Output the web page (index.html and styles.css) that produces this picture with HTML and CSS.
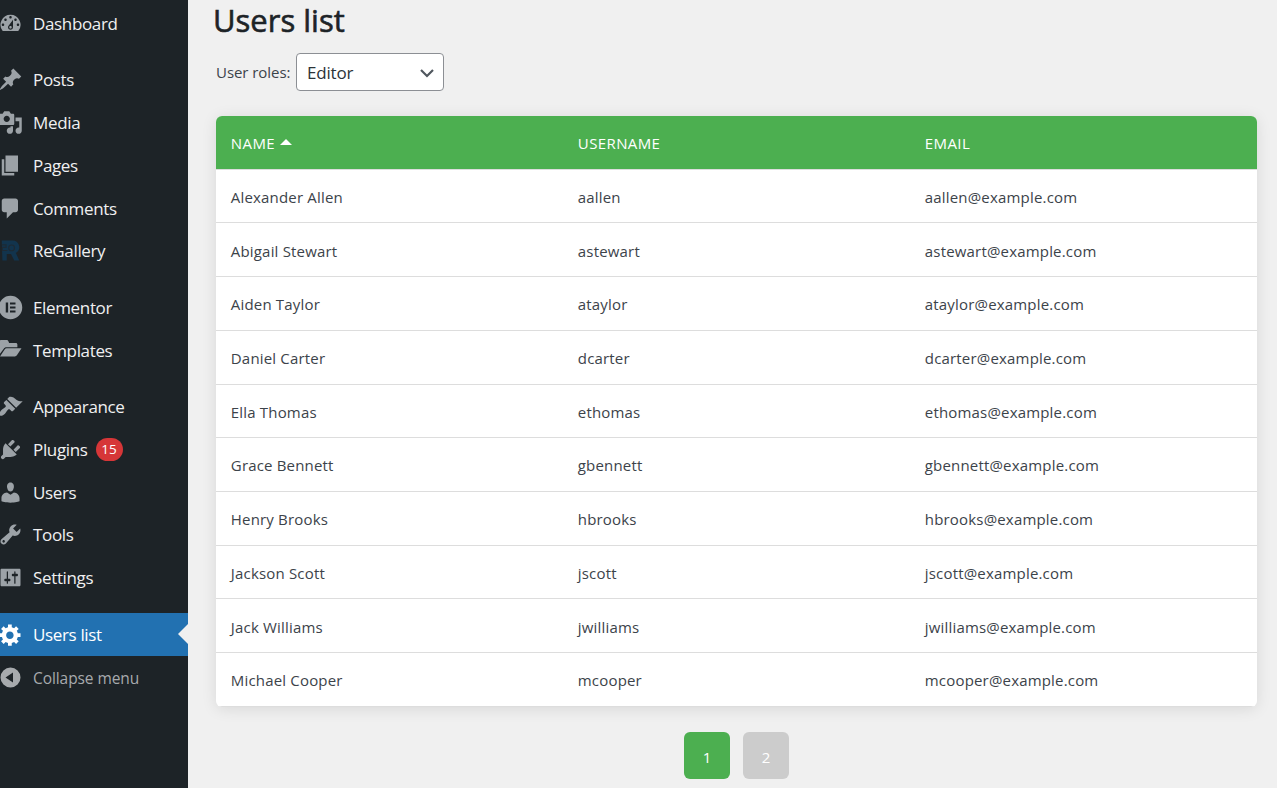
FILE: index.html
```
<!DOCTYPE html>
<html lang="en">
<head>
<meta charset="utf-8">
<title>Users list</title>
<link rel="stylesheet" href="styles.css">
</head>
<body>
<div class="app">
  <nav class="sidebar">
    <ul class="menu">
      <li class="item"><svg class="icon" viewBox="0 0 20 20"><path d="M3.76 16h12.48A7.998 7.998 0 0 0 10 3a7.998 7.998 0 0 0-6.24 13zM10 4c.55 0 1 .45 1 1s-.45 1-1 1-1-.45-1-1 .45-1 1-1zM6 6c.55 0 1 .45 1 1s-.45 1-1 1-1-.45-1-1 .45-1 1-1zm8 0c.55 0 1 .45 1 1s-.45 1-1 1-1-.45-1-1 .45-1 1-1zm-5.37 5.55L12 7v6c0 1.1-.9 2-2 2s-2-.9-2-2c0-.57.24-1.08.63-1.45zM4 10c.55 0 1 .45 1 1s-.45 1-1 1-1-.45-1-1 .45-1 1-1zm12 0c.55 0 1 .45 1 1s-.45 1-1 1-1-.45-1-1 .45-1 1-1zm-5 3c0-.55-.45-1-1-1s-1 .45-1 1 .45 1 1 1 1-.45 1-1z" fill-rule="evenodd"/></svg><span class="label">Dashboard</span></li>
    </ul>
    <ul class="menu">
      <li class="item"><svg class="icon" viewBox="0 0 20 20"><path d="M10.44 3.02l1.82-1.82 6.36 6.35-1.83 1.82c-1.05-.68-2.48-.57-3.41.36l-.75.75c-.92.93-1.04 2.35-.35 3.41l-1.83 1.82-2.41-2.41-2.8 2.79c-.42.42-3.38 2.71-3.8 2.29s1.86-3.39 2.28-3.81l2.79-2.79L4.1 9.36l1.83-1.82c1.05.69 2.48.57 3.4-.36l.75-.75c.93-.92 1.05-2.35.36-3.41z"/></svg><span class="label">Posts</span></li>
      <li class="item"><svg class="icon" viewBox="0 0 20 20"><path fill-rule="evenodd" d="M13 11V4c0-.55-.45-1-1-1h-1.67L9 1H5L3.67 3H2c-.55 0-1 .45-1 1v7c0 .55.45 1 1 1h10c.55 0 1-.45 1-1zM7 4.5c1.38 0 2.5 1.12 2.5 2.5S8.38 9.5 7 9.5 4.5 8.38 4.5 7 5.62 4.5 7 4.5zM14 6h5v10.5c0 1.38-1.12 2.5-2.5 2.5S14 17.88 14 16.5s1.12-2.5 2.5-2.5c.17 0 .34.02.5.05V9h-3V6zm-4 8.05V13h2v3.5c0 1.38-1.12 2.5-2.5 2.5S7 17.88 7 16.5 8.12 14 9.5 14c.17 0 .34.02.5.05z"/></svg><span class="label">Media</span></li>
      <li class="item"><svg class="icon" viewBox="0 0 20 20"><path d="M6 15V2h10v13H6zm-1 1h8v2H3V5h2v11z"/></svg><span class="label">Pages</span></li>
      <li class="item"><svg class="icon" viewBox="0 0 20 20"><path d="M5 2h9c1.1 0 2 .9 2 2v7c0 1.1-.9 2-2 2h-2l-5 5v-5H5c-1.1 0-2-.9-2-2V4c0-1.1.9-2 2-2z"/></svg><span class="label">Comments</span></li>
      <li class="item"><svg class="icon icon-regallery" viewBox="0 0 20 20"><path d="M3 2h8.500a5.300 5.300 0 0 1 2.800 9.900L17 18h-4l-2.600-5.200H7V18H3.500z"/><circle class="cut" cx="10.900" cy="7.900" r="2.300"/><path class="cut" d="M3 5.500h3.500v2H3.500v2.500h4"/></svg><span class="label">ReGallery</span></li>
    </ul>
    <ul class="menu">
      <li class="item"><svg class="icon" viewBox="0 0 20 20"><path fill-rule="evenodd" d="M10 .6a9.400 9.400 0 1 0 0 18.800A9.400 9.400 0 0 0 10 .6zM6.200 6h1.900v8H6.200zM9.600 6H14v1.600H9.600zM9.600 9.200H14v1.600H9.600zM9.600 12.400H14V14H9.600z"/></svg><span class="label">Elementor</span></li>
      <li class="item"><svg class="icon" viewBox="0 0 20 20"><path d="M1.300 13V2.800c0-.7.500-1.200 1.200-1.200h4.400c.8 0 1.300.5 1.500 1.200l.5 1.200h5.400c.7 0 1.200.5 1.200 1.200v2.100H6.700c-.9 0-1.600.4-2.100 1.200zM1.600 14.700l3.700-5.600c.4-.6.900-.9 1.600-.9h11.900l-3.700 5.600c-.4.600-.9.900-1.600.9z"/></svg><span class="label">Templates</span></li>
    </ul>
    <ul class="menu">
      <li class="item"><svg class="icon" viewBox="0 0 20 20"><path d="M14.480 11.060L7.410 3.990l1.500-1.500c.5-.56 2.300-.47 3.510.32 1.210.8 1.430 1.280 2.910 2.100 1.180.64 2.450 1.260 4.450.85zm-.71.71L6.700 4.700 4.930 6.470c-.39.39-.39 1.020 0 1.410l1.060 1.060c.39.39.39 1.030 0 1.420-.6.6-1.430 1.110-2.210 1.690-.35.26-.7.53-1.010.84C1.430 14.230.4 16.080 1.400 17.070c.99 1 2.840-.03 4.180-1.360.31-.31.58-.66.85-1.020.57-.78 1.080-1.610 1.690-2.210.39-.39 1.020-.39 1.410 0l1.060 1.060c.39.39 1.020.39 1.410 0z"/></svg><span class="label">Appearance</span></li>
      <li class="item"><svg class="icon" viewBox="0 0 20 20"><path d="M13.110 4.360L9.870 7.600 8 5.730l3.240-3.240c.35-.34 1.050-.2 1.560.32.52.51.66 1.210.31 1.550zm-8 1.770l.91-1.120 9.010 9.010-1.190.84c-.71.71-2.630 1.160-3.820 1.160H6.140L4.900 17.260c-.59.59-1.540.59-2.120 0-.59-.58-.59-1.530 0-2.120l1.240-1.240v-3.880c0-1.130.4-3.190 1.090-3.890zm7.260 3.970l3.240-3.240c.34-.35 1.040-.21 1.550.31.52.51.66 1.210.31 1.550l-3.240 3.250z"/></svg><span class="label">Plugins</span><span class="badge">15</span></li>
      <li class="item"><svg class="icon" viewBox="0 0 20 20"><path d="M10 9.250c-2.270 0-2.730-3.440-2.730-3.440C7 4.020 7.820 2 9.970 2c2.160 0 2.980 2.020 2.710 3.810 0 0-.41 3.440-2.680 3.440zm0 2.570L12.720 10c2.390 0 4.520 2.330 4.520 4.530v2.490s-3.650 1.130-7.240 1.130c-3.650 0-7.240-1.130-7.240-1.130v-2.490c0-2.250 1.940-4.480 4.470-4.480z"/></svg><span class="label">Users</span></li>
      <li class="item"><svg class="icon" viewBox="0 0 20 20"><path fill-rule="evenodd" d="M16.680 9.770c-1.340 1.340-3.300 1.670-4.950.99l-5.410 6.520c-.99.99-2.590.99-3.580 0s-.99-2.590 0-3.570l6.520-5.420c-.68-1.650-.35-3.610.99-4.950 1.280-1.280 3.120-1.620 4.720-1.060l-2.890 2.890 2.820 2.820 2.860-2.870c.53 1.580.18 3.390-1.080 4.650zM3.810 16.210c.4.39 1.040.39 1.430 0 .4-.4.4-1.040 0-1.430-.39-.4-1.030-.4-1.430 0-.39.39-.39 1.030 0 1.430z"/></svg><span class="label">Tools</span></li>
      <li class="item"><svg class="icon" viewBox="0 0 20 20"><path fill-rule="evenodd" d="M18 16V4c0-.55-.45-1-1-1H3c-.55 0-1 .45-1 1v12c0 .55.45 1 1 1h14c.55 0 1-.45 1-1zM8 11h1c.55 0 1 .45 1 1s-.45 1-1 1H8v1.500c0 .28-.22.5-.5.5s-.5-.22-.5-.5V13H6c-.55 0-1-.45-1-1s.45-1 1-1h1V5.500c0-.28.22-.5.5-.5s.5.22.5.5V11zm5-2h-1c-.55 0-1-.45-1-1s.45-1 1-1h1V5.500c0-.28.22-.5.5-.5s.5.22.5.5V7h1c.55 0 1 .45 1 1s-.45 1-1 1h-1v5.500c0 .28-.22.5-.5.5s-.5-.22-.5-.5V9z"/></svg><span class="label">Settings</span></li>
    </ul>
    <ul class="menu">
      <li class="item item-current"><svg class="icon" viewBox="0 0 20 20"><path fill-rule="evenodd" d="M18 12h-2.180c-.17.7-.44 1.350-.81 1.930l1.540 1.540-2.100 2.100-1.540-1.540c-.58.36-1.230.63-1.910.79V19H8v-2.180c-.68-.16-1.330-.43-1.910-.79l-1.540 1.540-2.120-2.120 1.540-1.540c-.36-.58-.63-1.230-.79-1.910H1V9.030h2.170c.16-.7.44-1.350.8-1.940L2.430 5.550l2.100-2.100 1.540 1.540c.58-.37 1.240-.64 1.930-.81V2h3v2.180c.68.16 1.330.43 1.910.79l1.540-1.540 2.120 2.120-1.540 1.540c.36.59.64 1.240.8 1.940H18V12zm-8.500 1.500c1.660 0 3-1.340 3-3s-1.340-3-3-3-3 1.340-3 3 1.340 3 3 3z"/></svg><span class="label">Users list</span></li>
      <li class="item item-collapse"><svg class="icon" viewBox="0 0 20 20"><path fill-rule="evenodd" d="M10 2a8 8 0 1 0 0 16 8 8 0 0 0 0-16zM12 6v8l-6-4z"/></svg><span class="label">Collapse menu</span></li>
    </ul>
  </nav>
  <main class="content">
    <h1 class="title">Users list</h1>
    <div class="filter">
      <span class="filter-label">User roles:</span>
      <div class="select"><span>Editor</span><svg class="chevron" viewBox="0 0 16 10"><path d="M2 2l6 6 6-6"/></svg></div>
    </div>
    <div class="table">
      <div class="row head"><span>NAME<i class="sort"></i></span><span>USERNAME</span><span>EMAIL</span></div>
      <div class="row"><span>Alexander Allen</span><span>aallen</span><span>aallen@example.com</span></div>
      <div class="row"><span>Abigail Stewart</span><span>astewart</span><span>astewart@example.com</span></div>
      <div class="row"><span>Aiden Taylor</span><span>ataylor</span><span>ataylor@example.com</span></div>
      <div class="row"><span>Daniel Carter</span><span>dcarter</span><span>dcarter@example.com</span></div>
      <div class="row"><span>Ella Thomas</span><span>ethomas</span><span>ethomas@example.com</span></div>
      <div class="row"><span>Grace Bennett</span><span>gbennett</span><span>gbennett@example.com</span></div>
      <div class="row"><span>Henry Brooks</span><span>hbrooks</span><span>hbrooks@example.com</span></div>
      <div class="row"><span>Jackson Scott</span><span>jscott</span><span>jscott@example.com</span></div>
      <div class="row"><span>Jack Williams</span><span>jwilliams</span><span>jwilliams@example.com</span></div>
      <div class="row"><span>Michael Cooper</span><span>mcooper</span><span>mcooper@example.com</span></div>
    </div>
    <div class="pager"><span class="page page-current">1</span><span class="page">2</span></div>
  </main>
</div>
</body>
</html>
```
FILE: styles.css
```
* { box-sizing: border-box; }
body {
  margin: 0;
  background: #f0f0f0;
  font-family: "Open Sans", "Noto Sans", sans-serif;
  color: #3c434a;
}
.app { display: flex; height: 788px; overflow: hidden; }
.sidebar {
  width: 188px;
  flex: none;
  padding-top: 2px;
  background: #1d2327;
  color: #f0f0f1;
  display: flex;
  flex-direction: column;
  gap: 13.6px;
}
.menu { list-style: none; margin: 0; padding: 0; }
.item {
  position: relative;
  display: flex;
  align-items: center;
  height: 42.8px;
  font-size: 17px;
  letter-spacing: -0.35px;
  white-space: nowrap;
}
.icon { width: 25px; height: 25px; margin: 0 9.600px 0 -1.600px; fill: #9ca2a7; flex: none; }
.icon-regallery { fill: #12344d; }
.icon-regallery .cut { fill: none; stroke: #1d2a35; stroke-width: 0.900; }
.badge {
  display: flex;
  align-items: center;
  justify-content: center;
  width: 27px;
  height: 23px;
  margin-left: 8px;
  border-radius: 12px;
  background: #d63638;
  color: #fff;
  font-size: 13.500px;
  font-weight: 500;
  letter-spacing: 0;
}
.item-current { height: 43px; background: #2271b1; color: #fff; }
.item-current .icon { fill: #fff; }
.item-current::after {
  content: "";
  position: absolute;
  right: 0;
  top: 11px;
  border: 10px solid transparent;
  border-left: 0;
  border-right-color: #f0f0f0;
}
.item-collapse { color: #a7aaad; font-size: 15.500px; letter-spacing: -0.08px; }
.item-collapse .label { padding-top: 1px; }
.item-collapse .icon { fill: #a7aaad; }
.content { flex: 1; padding: 0 20px 0 28px; }
.title {
  margin: 0 0 0 -3px;
  height: 53px;
  line-height: 41px;
  font-size: 31px;
  font-weight: 500;
  -webkit-text-stroke: 0.600px #1d2327;
  color: #1d2327;
}
.filter { display: flex; align-items: center; height: 38px; margin-bottom: 25px; }
.filter-label { width: 80px; font-size: 15px; letter-spacing: -0.05px; }
.select {
  display: flex;
  align-items: center;
  justify-content: space-between;
  width: 148px;
  height: 38px;
  padding: 1px 8px 0 10px;
  border: 1px solid #8c8f94;
  border-radius: 4px;
  background: #fff;
  color: #2c3338;
  font-size: 17px;
  letter-spacing: -0.2px;
}
.chevron { width: 16px; height: 10px; fill: none; stroke: #50575e; stroke-width: 2.200; }
.table {
  overflow: hidden;
  border-radius: 6px;
  background: #fff;
  box-shadow: 0 2px 15px rgba(0, 0, 0, 0.1);
}
.row {
  display: grid;
  grid-template-columns: repeat(3, 1fr);
  align-items: center;
  height: 53.720px;
  border-bottom: 1px solid #ddd;
  padding-top: 1.600px;
  font-size: 15px;
  letter-spacing: 0.18px;
}
.row span { padding-left: 14.800px; }
.head { background: #4caf50; color: #fff; letter-spacing: 0.4px; }
.sort {
  display: inline-block;
  margin-left: 5px;
  vertical-align: 4px;
  border: 6px solid transparent;
  border-top: 0;
  border-bottom-color: #fff;
}
.pager { display: flex; justify-content: center; gap: 13px; margin-top: 25px; }
.page {
  display: flex;
  align-items: center;
  justify-content: center;
  width: 46px;
  height: 47px;
  padding-top: 3px;
  border-radius: 6px;
  background: #ccc;
  color: #fff;
  font-size: 15px;
}
.page-current { background: #4caf50; }
```
